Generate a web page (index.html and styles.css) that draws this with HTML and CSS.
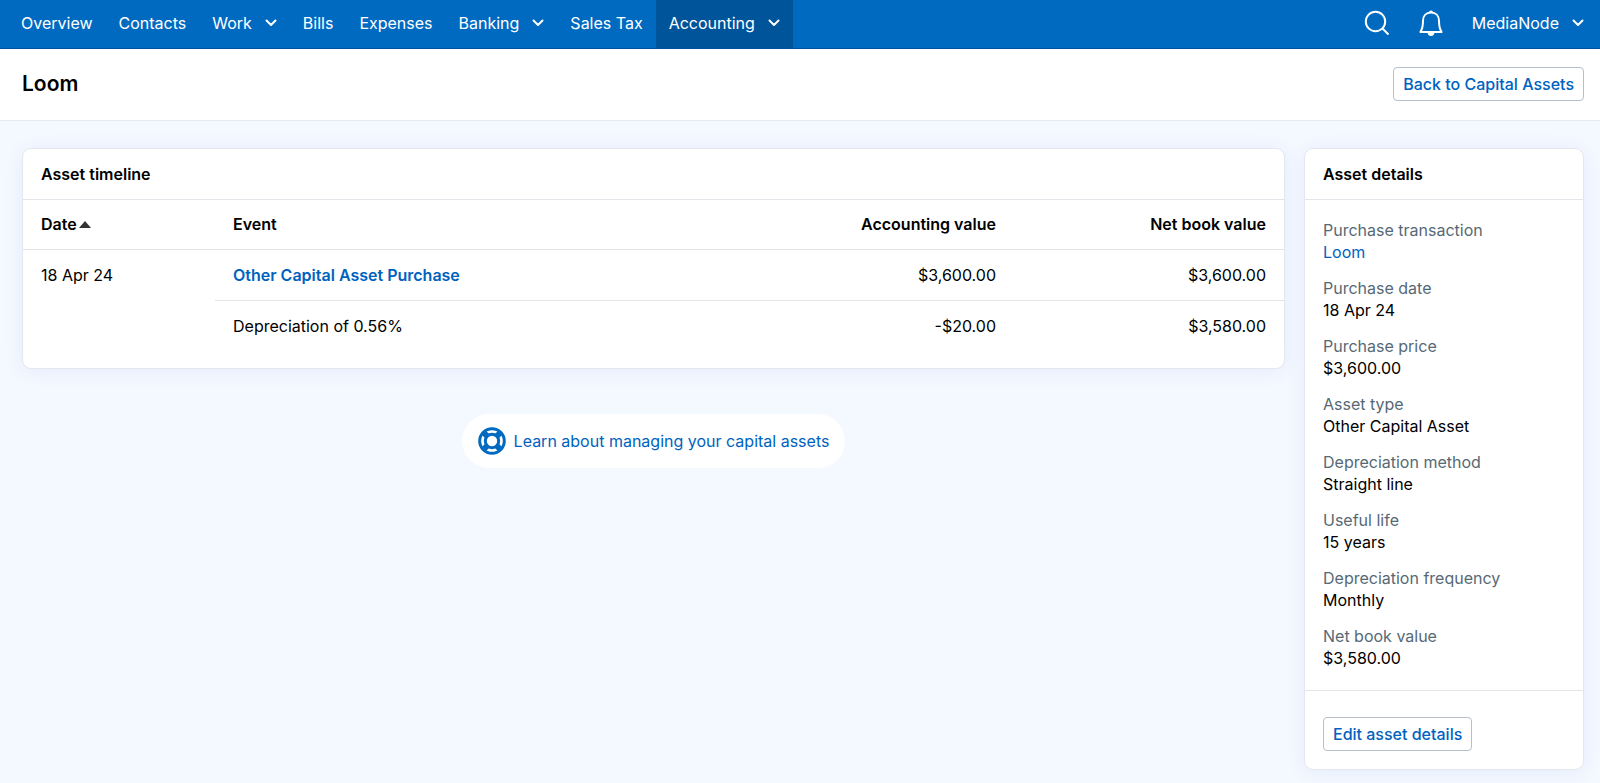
FILE: index.html
```
<!DOCTYPE html>
<html lang="en">
<head>
    <meta charset="UTF-8">
    <meta name="viewport" content="width=device-width, initial-scale=1.0">
    <title>Loom - Capital Assets</title>
    <link rel="stylesheet" href="styles.css">
</head>
<body>
    <header class="navbar">
        <nav class="nav-links">
            <a href="#">Overview</a>
            <a href="#">Contacts</a>
            <a href="#">Work <svg class="chevron" viewBox="0 0 12 8"><path d="M1.5 1.5 6 6l4.5-4.5"/></svg></a>
            <a href="#">Bills</a>
            <a href="#">Expenses</a>
            <a href="#">Banking <svg class="chevron" viewBox="0 0 12 8"><path d="M1.5 1.5 6 6l4.5-4.5"/></svg></a>
            <a href="#">Sales Tax</a>
            <a href="#" class="active">Accounting <svg class="chevron" viewBox="0 0 12 8"><path d="M1.5 1.5 6 6l4.5-4.5"/></svg></a>
        </nav>
        <div class="nav-tools">
            <button class="icon-button" aria-label="Search">
                <svg viewBox="0 0 26 26"><circle cx="11.5" cy="11.5" r="9.7"/><path d="m18.5 18.5 6 6"/></svg>
            </button>
            <button class="icon-button" aria-label="Notifications">
                <svg viewBox="0 0 26 26"><path d="M13 2.5c-5 0-8 3.500-8 8.300 0 4.700-.5 8.200-2.600 11.200h21.200C21.500 19 21 15.500 21 10.800c0-4.800-3-8.300-8-8.300z"/><path class="solid" d="M11 2.500a2 2 0 0 1 4 0zM9.600 22.500h6.800a3.400 3.400 0 0 1-6.800 0z"/></svg>
            </button>
            <a href="#">MediaNode <svg class="chevron" viewBox="0 0 12 8"><path d="M1.5 1.5 6 6l4.5-4.5"/></svg></a>
        </div>
    </header>

    <div class="page-header">
        <h1>Loom</h1>
        <button class="button">Back to Capital Assets</button>
    </div>

    <main class="content">
        <div class="main-column">
            <section class="panel">
                <h2>Asset timeline</h2>
                <table>
                    <thead>
                        <tr>
                            <th class="date">Date<span class="sort-arrow"></span></th>
                            <th>Event</th>
                            <th class="amount">Accounting value</th>
                            <th class="amount">Net book value</th>
                        </tr>
                    </thead>
                    <tbody>
                        <tr>
                            <td rowspan="2">18 Apr 24</td>
                            <td><a href="#" class="event-link">Other Capital Asset Purchase</a></td>
                            <td class="amount">$3,600.00</td>
                            <td class="amount">$3,600.00</td>
                        </tr>
                        <tr>
                            <td>Depreciation of 0.56%</td>
                            <td class="amount">-$20.00</td>
                            <td class="amount">$3,580.00</td>
                        </tr>
                    </tbody>
                </table>
            </section>

            <a href="#" class="help-link">
                <svg viewBox="0 0 28 28">
                    <circle cx="14" cy="14" r="12.3"/>
                    <circle cx="14" cy="14" r="6.7"/>
                    <path d="m5.500 5.500 4 4m9 9 4 4m0-17-4 4m-9 9-4 4"/>
                </svg>
                Learn about managing your capital assets
            </a>
        </div>

        <aside class="panel">
            <h2>Asset details</h2>
            <dl>
                <div><dt>Purchase transaction</dt><dd><a href="#">Loom</a></dd></div>
                <div><dt>Purchase date</dt><dd>18 Apr 24</dd></div>
                <div><dt>Purchase price</dt><dd>$3,600.00</dd></div>
                <div><dt>Asset type</dt><dd>Other Capital Asset</dd></div>
                <div><dt>Depreciation method</dt><dd>Straight line</dd></div>
                <div><dt>Useful life</dt><dd>15 years</dd></div>
                <div><dt>Depreciation frequency</dt><dd>Monthly</dd></div>
                <div><dt>Net book value</dt><dd>$3,580.00</dd></div>
            </dl>
            <div class="panel-footer">
                <button class="button">Edit asset details</button>
            </div>
        </aside>
    </main>
</body>
</html>
```
FILE: styles.css
```
* {
    box-sizing: border-box;
}

body {
    margin: 0;
    background-color: #f4f8ff;
    color: #000;
    font-family: Inter, "Liberation Sans", sans-serif;
    font-size: 16px;
    line-height: 22px;
}

h1, h2, dl, dd {
    margin: 0;
}

a {
    color: #0062c0;
    text-decoration: none;
}

button {
    font: inherit;
    cursor: pointer;
}

/* Navigation */

.navbar {
    display: flex;
    justify-content: space-between;
    height: 49px;
    padding: 0 16px 0 8px;
    background-color: #006ac1;
    border-bottom: 1px solid #0050a0;
}

.nav-links, .nav-tools {
    display: flex;
}

.navbar a {
    display: flex;
    align-items: center;
    gap: 13px;
    padding: 0 13px 2px;
    color: #fff;
    white-space: nowrap;
}

.navbar a.active {
    background-color: #005499;
}

.chevron {
    width: 12px;
    height: 8px;
    fill: none;
    stroke: #fff;
    stroke-width: 2;
    stroke-linecap: round;
    stroke-linejoin: round;
}

.nav-tools {
    align-items: center;
    gap: 28px;
}

.nav-tools a {
    padding-left: 0;
    padding-right: 0;
}

.icon-button {
    width: 26px;
    height: 26px;
    margin-bottom: 2px;
    padding: 0;
    border: 0;
    background: none;
}

.icon-button svg {
    display: block;
    fill: none;
    stroke: #fff;
    stroke-width: 2;
    stroke-linejoin: round;
}

.icon-button .solid {
    fill: #fff;
    stroke: none;
}

/* Page header */

.page-header {
    display: flex;
    justify-content: space-between;
    align-items: center;
    height: 72px;
    padding: 0 16px 2px 22px;
    background-color: #fff;
    border-bottom: 1px solid #e4e9ee;
}

h1 {
    font-size: 21px;
    font-weight: 600;
}

.button {
    height: 34px;
    padding: 0 9px;
    border: 1px solid #b8bfc8;
    border-radius: 4px;
    background-color: #fff;
    color: #0062c0;
    font-weight: 500;
}

/* Content */

.content {
    display: grid;
    grid-template-columns: 1fr 280px;
    align-items: start;
    gap: 19px;
    padding: 27px 16px 14px 22px;
}

.main-column {
    display: flex;
    flex-direction: column;
    align-items: center;
    gap: 45px;
}

.panel {
    width: 100%;
    background-color: #fff;
    border: 1px solid #e4e8ee;
    border-radius: 9px;
    box-shadow: 0 2px 20px rgba(0, 80, 220, 0.07);
}

.panel h2 {
    padding: 14px 18px;
    border-bottom: 1px solid #e4e5ea;
    font-size: 16px;
    font-weight: 600;
}

table {
    width: 100%;
    margin-bottom: 17px;
    border-collapse: collapse;
}

th, td {
    padding: 0 18px;
    text-align: left;
    vertical-align: top;
    line-height: 50px;
}

th {
    font-weight: 600;
    line-height: 49px;
}

thead tr, tbody tr:first-child td:not([rowspan]) {
    border-bottom: 1px solid #e4e5ea;
}

.date {
    width: 192px;
}

.amount {
    width: 270px;
    text-align: right;
}

.sort-arrow {
    display: inline-block;
    margin-left: 2px;
    border: 6px solid transparent;
    border-top: 0;
    border-bottom: 7px solid #333;
    vertical-align: 2px;
}

.event-link {
    font-weight: 600;
}

.help-link {
    display: flex;
    align-items: center;
    gap: 8px;
    height: 54px;
    padding: 0 16px;
    border-radius: 27px;
    background-color: #fff;
}

.help-link svg {
    width: 28px;
    height: 28px;
    fill: none;
    stroke: #006ac1;
    stroke-width: 3;
}

.help-link path {
    stroke-width: 6;
}

/* Asset details */

dl {
    display: flex;
    flex-direction: column;
    gap: 14px;
    padding: 19px 18px 21px;
}

dt {
    color: #566975;
}

.panel-footer {
    padding: 26px 18px 18px;
    border-top: 1px solid #e4e5ea;
}
```
